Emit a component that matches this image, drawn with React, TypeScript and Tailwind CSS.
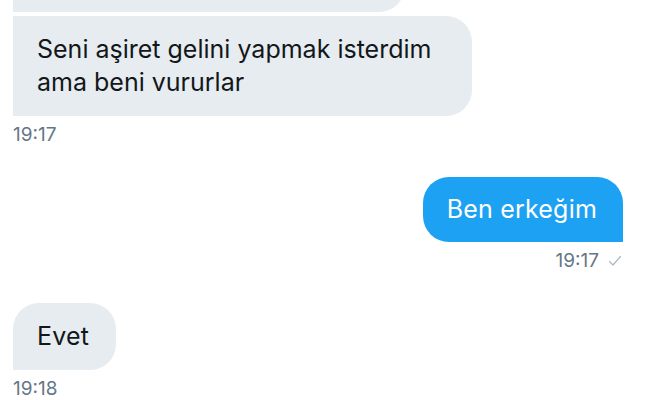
const font = { fontFamily: 'Inter, "Liberation Sans", Arial, sans-serif' };

function ReadTick() {
  return (
    <svg width="14" height="12" viewBox="0 0 14 12" fill="none" aria-hidden="true">
      <polyline points="1.5,6.5 5,10 12.5,1.5" stroke="#aab8c2" strokeWidth="1.2" strokeLinecap="round" strokeLinejoin="round" />
    </svg>
  );
}

function Time({ label, right, read }: { label: string; right?: boolean; read?: boolean }) {
  return (
    <div
      className={`mt-[7px] flex items-center gap-[9px] text-[19px] leading-6 text-[#657786] ${right ? "justify-end pr-[1px]" : ""}`}
    >
      <span>{label}</span>
      {read && <ReadTick />}
    </div>
  );
}

export default function App() {
  return (
    <div
      className="flex h-[400px] w-[655px] flex-col overflow-hidden bg-white pl-[13px] pr-[32px] text-[#14171a]"
      style={font}
    >
      {/* incoming group */}
      <div className="flex flex-col items-start gap-1">
        <div className="-mt-[40px] h-[52px] w-[392px] rounded-tr-[26px] rounded-br-[26px] bg-[#e6ecf0]" />
        <div className="max-w-[459px] rounded-tr-[26px] rounded-br-[26px] bg-[#e6ecf0] py-[17px] pl-6 pr-[26px] text-[25px] leading-[33px]">
          Seni aşiret gelini yapmak isterdim ama beni vururlar
        </div>
      </div>
      <Time label="19:17" />

      {/* outgoing */}
      <div className="mt-[30px] flex flex-col items-end">
        <div className="rounded-tl-[26px] rounded-tr-[26px] rounded-bl-[26px] bg-[#1da1f2] py-4 pl-6 pr-[26px] text-[25px] leading-[33px] tracking-[0.2px] text-white">
          Ben erkeğim
        </div>
      </div>
      <Time label="19:17" right read />

      {/* incoming */}
      <div className="mt-[30px] flex flex-col items-start">
        <div className="rounded-tl-[26px] rounded-tr-[26px] rounded-br-[26px] bg-[#e6ecf0] py-[17px] pl-6 pr-[27px] text-[25px] leading-[33px] tracking-[0.2px]">
          Evet
        </div>
      </div>
      <Time label="19:18" />
    </div>
  );
}
